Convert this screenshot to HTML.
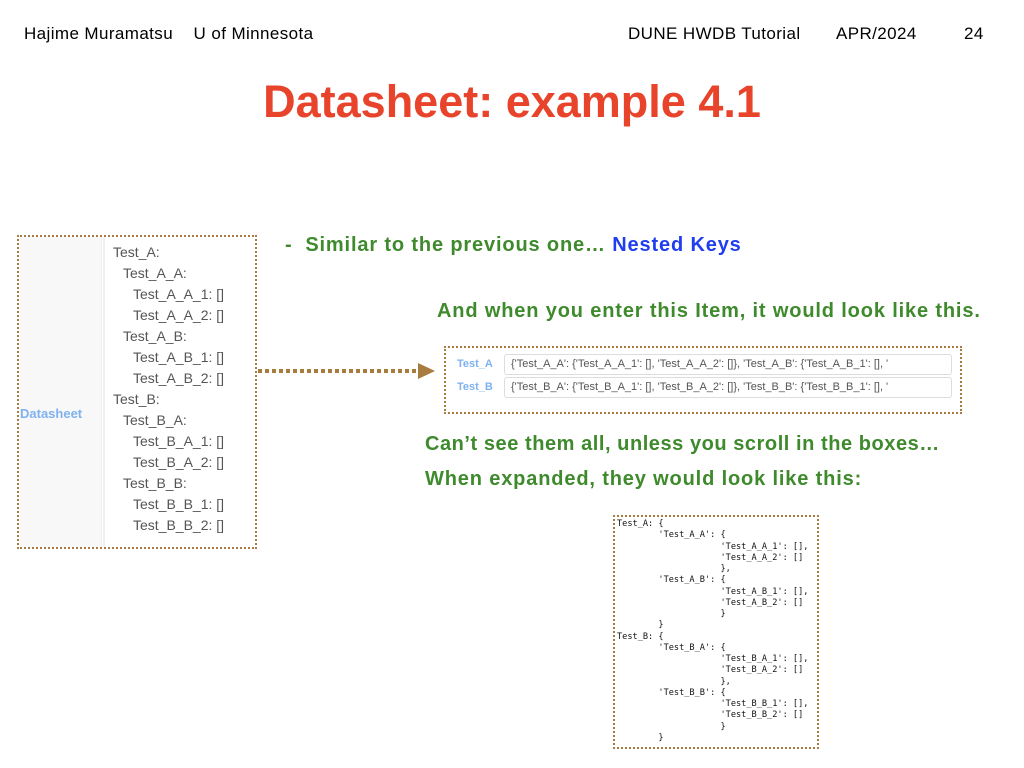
<!DOCTYPE html>
<html><head><style>
body{margin:0;width:1024px;height:768px;background:#fff;position:relative;font-family:"Liberation Sans",sans-serif;overflow:hidden}
.a{position:absolute;white-space:nowrap}
.hd{font-size:17px;letter-spacing:0.4px;color:#000;top:24px}
.g{color:#3e8a2c;font-weight:bold;font-size:20px;letter-spacing:0.85px}
.lt div{position:absolute;font-size:14px;color:#555;white-space:nowrap}
.row{position:absolute;left:454px;height:22px;width:496px;font-size:11px;color:#555}
.row .k{position:absolute;left:3px;top:4px;color:#7fb2f0;font-weight:bold}
.row .v{position:absolute;left:50px;top:0;width:440px;height:19px;border:1px solid #ddd;border-radius:3px;padding-left:6px;line-height:19px;overflow:hidden;background:#fff}
pre{margin:0;font-family:"DejaVu Sans Mono","Liberation Mono",monospace;font-size:8.6px;line-height:11.25px;color:#111}
</style></head><body>
<div class="a hd" style="left:24px">Hajime Muramatsu&nbsp;&nbsp;&nbsp;&nbsp;U of Minnesota</div>
<div class="a hd" style="left:628px">DUNE HWDB Tutorial</div>
<div class="a hd" style="left:836px">APR/2024</div>
<div class="a hd" style="left:964px">24</div>
<div class="a" style="left:0;width:1024px;text-align:center;top:76px;font-size:45px;font-weight:bold;color:#e8432b">Datasheet: example 4.1</div>

<div class="a" style="left:17px;top:235px;width:236px;height:310px;border:2px dotted #a87b3f">
<div style="position:absolute;left:0;top:0;width:82px;height:310px;background:#f8f8f8;border-right:1px solid #eee"></div>
<div style="position:absolute;left:84px;top:0;width:2px;height:310px;background:#f0f0f0"></div>
<div class="a" style="left:1px;top:169px;font-size:13px;font-weight:bold;color:#7fb2f0">Datasheet</div>
</div>
<div class="lt">
<div style="left:113px;top:244px">Test_A:</div>
<div style="left:123px;top:265px">Test_A_A:</div>
<div style="left:133px;top:286px">Test_A_A_1: []</div>
<div style="left:133px;top:307px">Test_A_A_2: []</div>
<div style="left:123px;top:328px">Test_A_B:</div>
<div style="left:133px;top:349px">Test_A_B_1: []</div>
<div style="left:133px;top:370px">Test_A_B_2: []</div>
<div style="left:113px;top:391px">Test_B:</div>
<div style="left:123px;top:412px">Test_B_A:</div>
<div style="left:133px;top:433px">Test_B_A_1: []</div>
<div style="left:133px;top:454px">Test_B_A_2: []</div>
<div style="left:123px;top:475px">Test_B_B:</div>
<div style="left:133px;top:496px">Test_B_B_1: []</div>
<div style="left:133px;top:517px">Test_B_B_2: []</div>
</div>

<svg class="a" style="left:255px;top:360px" width="185" height="22"><line x1="3" y1="11" x2="165" y2="11" stroke="#a87b3f" stroke-width="4" stroke-dasharray="4,3"/><polygon points="163,3 180,11 163,19" fill="#a87b3f"/></svg>

<div class="a g" style="left:285px;top:234px">-&nbsp;&nbsp;Similar to the previous one… <span style="color:#1f3ef0">Nested Keys</span></div>
<div class="a g" style="left:437px;top:300px">And when you enter this Item, it would look like this.</div>

<div class="a" style="left:444px;top:346px;width:514px;height:64px;border:2px dotted #a87b3f"></div>
<div class="row" style="top:354px"><span class="k">Test_A</span><div class="v">{'Test_A_A': {'Test_A_A_1': [], 'Test_A_A_2': []}, 'Test_A_B': {'Test_A_B_1': [], '</div></div>
<div class="row" style="top:377px"><span class="k">Test_B</span><div class="v">{'Test_B_A': {'Test_B_A_1': [], 'Test_B_A_2': []}, 'Test_B_B': {'Test_B_B_1': [], '</div></div>

<div class="a g" style="left:425px;top:433px;letter-spacing:0.55px">Can’t see them all, unless you scroll in the boxes…</div>
<div class="a g" style="left:425px;top:468px">When expanded, they would look like this:</div>

<div class="a" style="left:613px;top:515px;width:202px;height:230px;border:2px dotted #a87b3f">
<pre style="position:absolute;left:2px;top:2px">Test_A: {
        'Test_A_A': {
                    'Test_A_A_1': [],
                    'Test_A_A_2': []
                    },
        'Test_A_B': {
                    'Test_A_B_1': [],
                    'Test_A_B_2': []
                    }
        }
Test_B: {
        'Test_B_A': {
                    'Test_B_A_1': [],
                    'Test_B_A_2': []
                    },
        'Test_B_B': {
                    'Test_B_B_1': [],
                    'Test_B_B_2': []
                    }
        }</pre>
</div>
</body></html>
